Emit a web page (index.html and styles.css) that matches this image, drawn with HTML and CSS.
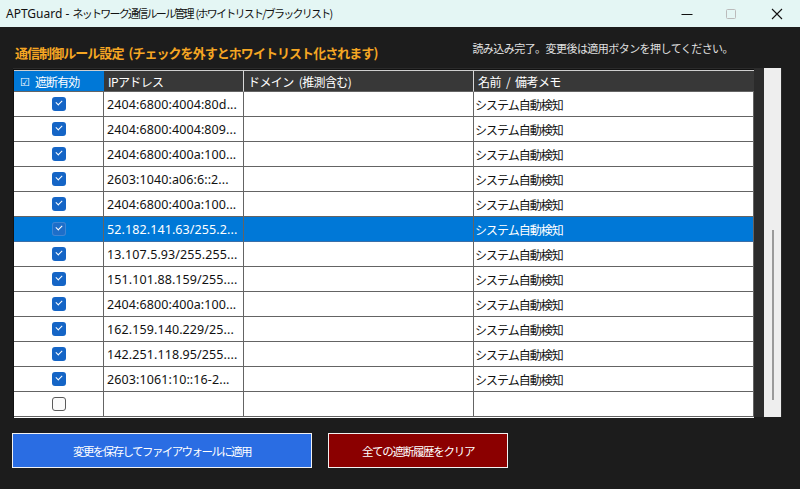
FILE: index.html
```html
<!DOCTYPE html>
<html lang="ja">
<head>
<meta charset="utf-8">
<title>APTGuard</title>
<link rel="stylesheet" href="styles.css">
</head>
<body>
<div class="window">
  <div class="titlebar">
    <span class="title"><span class="latin">APTGuard - </span>ネットワーク通信ルール管理 (ホワイトリスト/ブラックリスト)</span>
    <div class="controls">
      <span class="ctl min"><svg width="12" height="12" viewBox="0 0 12 12"><line x1="0.5" y1="6.5" x2="11.5" y2="6.5" stroke="#111" stroke-width="1"/></svg></span>
      <span class="ctl max"><svg width="12" height="12" viewBox="0 0 12 12"><rect x="1.5" y="1.5" width="9" height="9" rx="1" fill="none" stroke="#bbb" stroke-width="1"/></svg></span>
      <span class="ctl close"><svg width="12" height="12" viewBox="0 0 12 12"><path d="M1 1 L11 11 M11 1 L1 11" stroke="#111" stroke-width="1.1"/></svg></span>
    </div>
  </div>
  <div class="content">
    <div class="toprow">
      <h1 class="heading">通信制御ルール設定 (チェックを外すとホワイトリスト化されます)</h1>
      <span class="status">読み込み完了。変更後は適用ボタンを押してください。</span>
    </div>
    <div class="gridwrap">
      <div class="table">
        <div class="row head">
          <div class="cell c1 active"><span class="hbox">☑</span>遮断有効</div>
          <div class="cell c2">IPアドレス</div>
          <div class="cell c3">ドメイン (推測含む)</div>
          <div class="cell c4">名前 / 備考メモ</div>
        </div>
        <div class="row"><div class="cell c1"><span class="cb on"></span></div><div class="cell c2 ip">2404:6800:4004:80d...</div><div class="cell c3"></div><div class="cell c4 jp">システム自動検知</div></div>
        <div class="row"><div class="cell c1"><span class="cb on"></span></div><div class="cell c2 ip">2404:6800:4004:809...</div><div class="cell c3"></div><div class="cell c4 jp">システム自動検知</div></div>
        <div class="row"><div class="cell c1"><span class="cb on"></span></div><div class="cell c2 ip">2404:6800:400a:100...</div><div class="cell c3"></div><div class="cell c4 jp">システム自動検知</div></div>
        <div class="row"><div class="cell c1"><span class="cb on"></span></div><div class="cell c2 ip">2603:1040:a06:6::2...</div><div class="cell c3"></div><div class="cell c4 jp">システム自動検知</div></div>
        <div class="row"><div class="cell c1"><span class="cb on"></span></div><div class="cell c2 ip">2404:6800:400a:100...</div><div class="cell c3"></div><div class="cell c4 jp">システム自動検知</div></div>
        <div class="row selected"><div class="cell c1"><span class="cb on"></span></div><div class="cell c2 ip">52.182.141.63/255.2...</div><div class="cell c3"></div><div class="cell c4 jp">システム自動検知</div></div>
        <div class="row"><div class="cell c1"><span class="cb on"></span></div><div class="cell c2 ip">13.107.5.93/255.255...</div><div class="cell c3"></div><div class="cell c4 jp">システム自動検知</div></div>
        <div class="row"><div class="cell c1"><span class="cb on"></span></div><div class="cell c2 ip">151.101.88.159/255....</div><div class="cell c3"></div><div class="cell c4 jp">システム自動検知</div></div>
        <div class="row"><div class="cell c1"><span class="cb on"></span></div><div class="cell c2 ip">2404:6800:400a:100...</div><div class="cell c3"></div><div class="cell c4 jp">システム自動検知</div></div>
        <div class="row"><div class="cell c1"><span class="cb on"></span></div><div class="cell c2 ip">162.159.140.229/25...</div><div class="cell c3"></div><div class="cell c4 jp">システム自動検知</div></div>
        <div class="row"><div class="cell c1"><span class="cb on"></span></div><div class="cell c2 ip">142.251.118.95/255....</div><div class="cell c3"></div><div class="cell c4 jp">システム自動検知</div></div>
        <div class="row"><div class="cell c1"><span class="cb on"></span></div><div class="cell c2 ip">2603:1061:10::16-2...</div><div class="cell c3"></div><div class="cell c4 jp">システム自動検知</div></div>
        <div class="row"><div class="cell c1"><span class="cb off"></span></div><div class="cell c2 ip"></div><div class="cell c3"></div><div class="cell c4 jp"></div></div>
      </div>
      <div class="vscroll"><div class="thumb"></div></div>
    </div>
    <div class="buttons">
      <button class="btn apply">変更を保存してファイアウォールに適用</button>
      <button class="btn clear">全ての遮断履歴をクリア</button>
    </div>
  </div>
</div>
</body>
</html>
```

FILE: styles.css
```css
* { box-sizing: border-box; }
html, body { margin: 0; padding: 0; }
body {
  width: 800px;
  height: 489px;
  overflow: hidden;
  font-family: "Noto Sans CJK JP", "Noto Sans", sans-serif;
  background: #1c1c1c;
}
.window {
  width: 800px;
  height: 489px;
  display: flex;
  flex-direction: column;
}
.titlebar {
  height: 27px;
  background: #e4f6f4;
  display: flex;
  align-items: center;
  justify-content: space-between;
  padding-left: 6px;
}
.title {
  font-size: 11px;
  color: #111;
  letter-spacing: -1.75px;
  word-spacing: 2px;
}
.latin {
  font-family: "Noto Sans", sans-serif;
  font-size: 12px;
  letter-spacing: 0;
  word-spacing: 0;
}
.controls { display: flex; height: 27px; }
.ctl {
  width: 46px;
  height: 27px;
  display: flex;
  align-items: center;
  justify-content: center;
}
.ctl.min { margin-right: -2px; }
.content {
  flex: 1;
  background: #1c1c1c;
  padding: 12px 0 0 0;
}
.toprow {
  display: flex;
  align-items: flex-start;
  justify-content: space-between;
  height: 29px;
  padding: 0 67px 0 15px;
}
.heading {
  margin: 0;
  font-size: 13px;
  font-weight: bold;
  color: #f5a623;
  letter-spacing: -0.95px;
  word-spacing: 3px;
  line-height: 22px;
  padding-top: 3px;
}
.status {
  font-size: 11px;
  color: #e0e0e0;
  letter-spacing: -0.55px;
  line-height: 18px;
}
.gridwrap {
  display: flex;
  margin-left: 13px;
  width: 769px;
  height: 349px;
  background: #2b2b2b;
}
.table {
  width: 741px;
  border-top: 1px solid #111;
  border-left: 1px solid #111;
  background: #fff;
  height: 349px;
  margin-top: 1px;
}
.row {
  display: grid;
  grid-template-columns: 90px 140px 230px 280px;
  height: 25px;
}
.row.head {
  height: 22px;
  background: #383838;
  border-top: 1px solid #cfcfcf;
}
.cell {
  border-right: 1px solid #646464;
  border-bottom: 1px solid #646464;
  font-size: 12px;
  color: #111;
  display: flex;
  align-items: center;
  padding-left: 3px;
  overflow: hidden;
  white-space: nowrap;
}
.head .cell {
  color: #fff;
  border-right: 1px solid #d8d8d8;
  border-bottom: 1px solid #646464;
  padding-left: 4px;
  letter-spacing: -0.6px;
  word-spacing: 3px;
}
.head .c1 { border-right: none; padding-left: 6px; justify-content: flex-start; letter-spacing: -0.9px; }
.head .c4 { border-right: none; }
.head .cell.active { background: #0078d7; }
.hbox { font-size: 11px; margin-right: 5px; letter-spacing: 0; }
.c1 { justify-content: center; padding-left: 0; }
.ip {
  font-family: "Noto Sans", sans-serif;
  font-size: 12.5px;
  letter-spacing: 0.1px;
  padding-left: 3px;
}
.jp { letter-spacing: -1px; padding-left: 1px; }
.row.selected { background: #0078d7; }
.row.selected .cell { color: #fff; border-bottom-color: #3b6fa8; }
.cb {
  width: 14px;
  height: 14px;
  border-radius: 3px;
  display: block;
  position: relative;
}
.cb.on { background: #1565c6; }
.cb.on::after {
  content: "";
  position: absolute;
  left: 4px;
  top: 3px;
  width: 5px;
  height: 3px;
  border-left: 1px solid #fff;
  border-bottom: 1px solid #fff;
  transform: rotate(-45deg);
}
.selected .cb.on { background: #1d6ec9; box-shadow: 0 0 0 1px #3f86d3 inset; }
.cb.off {
  background: #fbfbfb;
  border: 1px solid #5a5a5a;
}
.vscroll {
  margin-left: 10px;
  width: 17px;
  height: 349px;
  background: #eeeeee;
  position: relative;
}
.thumb {
  position: absolute;
  left: 8px;
  top: 162px;
  width: 2px;
  height: 170px;
  background: #9a9a9a;
}
.buttons {
  display: flex;
  gap: 16px;
  padding-left: 12px;
  margin-top: 16px;
}
.btn {
  height: 35px;
  border: 1px solid #f2f2f2;
  color: #fff;
  font-family: "Noto Sans CJK JP", sans-serif;
  font-size: 11.5px;
  letter-spacing: -1.6px;
  padding: 0;
}
.btn.apply { width: 300px; background: #2a6de3; }
.btn.clear { width: 180px; background: #8b0000; letter-spacing: -1.3px; }
```
